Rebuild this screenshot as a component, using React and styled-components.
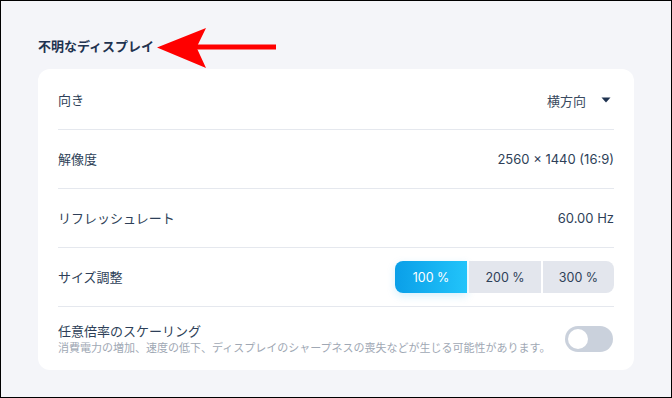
import React, { useState } from "react";
import styled, { createGlobalStyle } from "styled-components";

const GlobalStyle = createGlobalStyle`
  html, body {
    margin: 0;
    padding: 0;
  }
  body {
    font-family: "Inter", "Noto Sans CJK JP", sans-serif;
    background: #f4f5f9;
  }
`;

const Page = styled.div`
  position: relative;
  box-sizing: border-box;
  width: 672px;
  height: 398px;
  border: 1px solid #000;
  background: #f4f5f9;
  padding: 36px 37px 0 37px;
`;

const Title = styled.h2`
  margin: 0 0 14px 0;
  font-size: 13px;
  line-height: 18px;
  font-weight: 700;
  color: #1f3350;
`;

const Arrow = styled.svg`
  position: absolute;
  left: 154px;
  top: 25px;
`;

const Card = styled.div`
  background: #fff;
  border-radius: 12px;
  padding: 0 20px;
`;

const Row = styled.div`
  display: flex;
  align-items: center;
  justify-content: space-between;
  height: ${(p) => (p.$tall ? "63px" : "58px")};
  border-bottom: ${(p) => (p.$last ? "none" : "1px solid #e5e8ee")};
  padding-top: ${(p) => (p.$first ? "2px" : "0")};
`;

const Label = styled.div`
  font-size: 13px;
  color: #2e3f58;
  line-height: 18px;
`;

const Desc = styled.div`
  font-size: 11px;
  color: #a0a8b4;
  line-height: 14px;
  margin-top: 1px;
  white-space: nowrap;
`;

const Value = styled.div`
  font-size: 13px;
  color: #2e3f58;
`;

const Select = styled.div`
  display: flex;
  align-items: center;
  gap: 15px;
  font-size: 13px;
  color: #3a4a60;
  padding-right: 3px;
`;

const Segments = styled.div`
  display: flex;
  gap: 2px;
`;

const Segment = styled.button`
  width: 72px;
  height: 32px;
  border: none;
  font-family: inherit;
  font-size: 12.5px;
  cursor: pointer;
  color: ${(p) => (p.$active ? "#fff" : "#2e3f58")};
  background: ${(p) =>
    p.$active ? "linear-gradient(90deg, #0a9fe8, #22c4fa)" : "#e3e6ed"};
  box-shadow: ${(p) => (p.$active ? "0 3px 8px rgba(14,165,233,0.18)" : "none")};
  &:first-child {
    border-radius: 8px 0 0 8px;
  }
  &:last-child {
    border-radius: 0 8px 8px 0;
    width: 71px;
  }
`;

const Toggle = styled.div`
  width: 48px;
  height: 26px;
  border-radius: 13px;
  background: #cad1dc;
  position: relative;
  margin-right: 1px;
  &::after {
    content: "";
    position: absolute;
    left: 3px;
    top: 3px;
    width: 20px;
    height: 20px;
    border-radius: 50%;
    background: #fff;
  }
`;

const Caret = () => (
  <svg width="10" height="6" viewBox="0 0 10 6">
    <path d="M0.5 0.5 L9.5 0.5 L5 5.5 Z" fill="#1f3350" />
  </svg>
);

export default function App() {
  const [scale, setScale] = useState("100 %");
  const scales = ["100 %", "200 %", "300 %"];

  return (
    <>
      <GlobalStyle />
      <Page>
        <Title>不明なディスプレイ</Title>
        <Arrow width="124" height="44" viewBox="0 0 124 44">
          <rect x="40" y="18.5" width="81" height="5" fill="#ff0000" />
          <path d="M2 21.5 L51 2 L42 20.5 L42 22.5 L51 42 Z" fill="#ff0000" />
        </Arrow>
        <Card>
          <Row $first>
            <Label>向き</Label>
            <Select>
              横方向
              <Caret />
            </Select>
          </Row>
          <Row>
            <Label>解像度</Label>
            <Value>2560 × 1440 (16:9)</Value>
          </Row>
          <Row>
            <Label>リフレッシュレート</Label>
            <Value>60.00 Hz</Value>
          </Row>
          <Row>
            <Label>サイズ調整</Label>
            <Segments>
              {scales.map((s) => (
                <Segment key={s} $active={s === scale} onClick={() => setScale(s)}>
                  {s}
                </Segment>
              ))}
            </Segments>
          </Row>
          <Row $tall $last>
            <div>
              <Label>任意倍率のスケーリング</Label>
              <Desc>
                消費電力の増加、速度の低下、ディスプレイのシャープネスの喪失などが生じる可能性があります。
              </Desc>
            </div>
            <Toggle />
          </Row>
        </Card>
      </Page>
    </>
  );
}
